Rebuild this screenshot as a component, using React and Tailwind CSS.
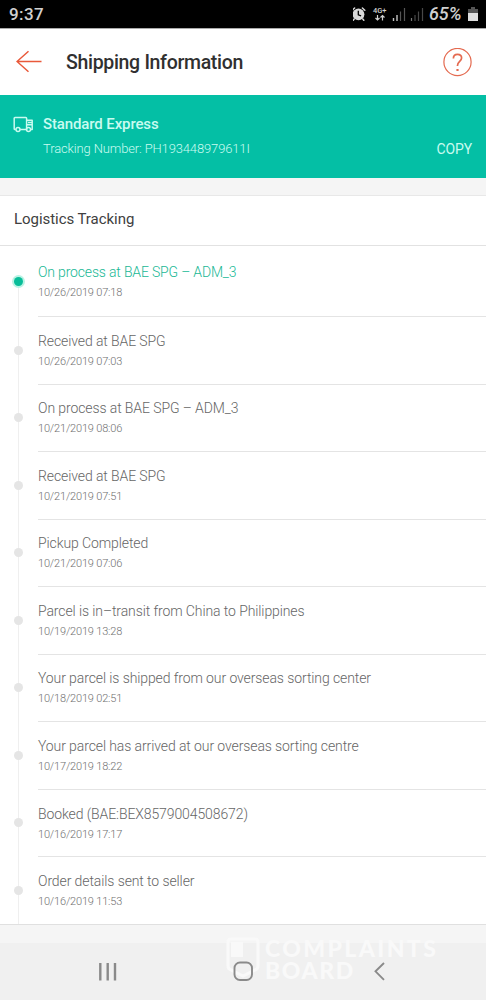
import React from 'react';

const events = [
  ['On process at BAE SPG – ADM_3', '10/26/2019 07:18'],
  ['Received at BAE SPG', '10/26/2019 07:03'],
  ['On process at BAE SPG – ADM_3', '10/21/2019 08:06'],
  ['Received at BAE SPG', '10/21/2019 07:51'],
  ['Pickup Completed', '10/21/2019 07:06'],
  ['Parcel is in–transit from China to Philippines', '10/19/2019 13:28'],
  ['Your parcel is shipped from our overseas sorting center', '10/18/2019 02:51'],
  ['Your parcel has arrived at our overseas sorting centre', '10/17/2019 18:22'],
  ['Booked (BAE:BEX8579004508672)', '10/16/2019 17:17'],
  ['Order details sent to seller', '10/16/2019 11:53'],
];

function StatusIcons() {
  return (
    <svg className="h-7 w-[76px] shrink-0" viewBox="0 0 76 28" fill="none">
      <g transform="translate(-3 0)">
        <g stroke="#d8d8d8" strokeWidth="1.5" strokeLinecap="round">
          <path d="M2.2 10.2 4.6 8M14.8 10.2 12.4 8M4.2 19l-1 1.3M12.8 19l1 1.3" />
        </g>
        <circle cx="8.500" cy="14.300" r="5.900" fill="#d8d8d8" />
        <path d="M8.300 10.800v4l2.800 1" stroke="#000" strokeWidth="1.300" />
      </g>
      <g transform="translate(-2 0)">
        <text x="22" y="13" fill="#d0d0d0" fontSize="7" fontWeight="500" fontFamily="Roboto, sans-serif" textLength="13.500" lengthAdjust="spacingAndGlyphs">4G+</text>
        <path d="M26.500 15v5m-2-2 2 2 2-2M31.500 20.500v-5m-2 2 2-2 2 2" stroke="#d0d0d0" strokeWidth="1.200" />
        <path d="M42.500 21v-3M46 21v-6" stroke="#c4c4c4" strokeWidth="1.400" />
        <path d="M49.500 21v-9.500M53.500 21V8" stroke="#555" strokeWidth="1.200" />
        <path d="M60.500 21v-3" stroke="#777" strokeWidth="1.200" />
        <path d="M64 21v-6M67.500 21v-9.500M71.500 21V8" stroke="#484848" strokeWidth="1.200" />
      </g>
    </svg>
  );
}

function StatusBar() {
  return (
    <div className="flex h-[28px] items-center bg-black pr-2 pl-[9px] text-[#d0d0d0]">
      <span className="w-[35px] text-[17px] leading-none font-medium tracking-[0.4px]">9:37</span>
      <div className="ml-auto flex items-center">
        <StatusIcons />
        <span className="mr-[2px] w-[37px] text-[18px] leading-none font-medium tracking-[-0.1px] italic">65%</span>
        <svg className="h-7 w-[10px]" viewBox="0 0 10 28">
          <path d="M3 7h4v2h3v4H0V9h3z" fill="#555" />
          <path d="M0 13h10v8H0z" fill="#dedede" />
        </svg>
      </div>
    </div>
  );
}

function Header() {
  return (
    <header className="flex h-[67px] items-center border-t border-[#aaa] bg-white pr-[14px] pl-4">
      <svg className="h-[24px] w-[26px]" viewBox="0 0 26 24" fill="none" stroke="#e9593a" strokeWidth="1.500">
        <path d="M25.500 11.500H1M12.500 1.200 1 11.500l11.500 10.300" />
      </svg>
      <h1 className="ml-[24px] pt-[2px] text-[19.500px] leading-6 font-medium tracking-[-0.32px] whitespace-nowrap text-[#303030]">Shipping Information</h1>
      <svg className="ml-auto h-[29px] w-[29px]" viewBox="0 0 29 29" fill="none" stroke="#e46a50">
        <circle cx="14.500" cy="14" r="13.600" strokeWidth="1.200" />
        <path d="M10.400 10.500c0-2.500 1.700-4.100 4.100-4.100 2.500 0 4.100 1.500 4.100 3.700 0 3.200-4.100 3.500-4.100 7.300v.5" strokeWidth="1.700" />
        <path d="M14.500 21v2" strokeWidth="2.200" />
      </svg>
    </header>
  );
}

function Carrier() {
  return (
    <section className="flex h-[83px] items-start bg-[#04bfa5] pr-[14px] pl-[13px] text-[#c9fbf0]">
      <svg className="mt-[21px] h-[17px] w-[21px]" viewBox="0 0 21 17" fill="none" stroke="currentColor" strokeWidth="1.500" strokeLinejoin="round">
        <path d="M2.800 13.500H2a.8.800 0 0 1-.8-.8V2.300a.8.800 0 0 1 .8-.8h10.800a.8.800 0 0 1 .8.800v11.200H7.200M13.600 4.200h5.600v9.300H18M13.600 8.800h5.600M15 6.500h4" />
        <circle cx="5" cy="13.500" r="2" />
        <circle cx="15.500" cy="13.500" r="2" />
      </svg>
      <div className="mt-[18px] ml-[9px] whitespace-nowrap">
        <p className="text-[15px] leading-[22px] font-medium tracking-[-0.12px]">Standard Express</p>
        <p className="mt-[4px] text-[13px] leading-5 font-light tracking-[-0.14px]">Tracking Number: PH193448979611I</p>
      </div>
      <button className="mt-[44px] ml-auto text-[14px] leading-5 tracking-[-0.15px]">COPY</button>
    </section>
  );
}

function TrackingEvent({ title, time, active }) {
  return (
    <li className={active ? 'flex h-[71px]' : 'flex h-[67.550px]'}>
      <div className="flex w-[37px] shrink-0 flex-col items-center">
        <span className={active ? 'h-[29px] shrink-0' : 'h-[28.500px] w-px shrink-0 bg-[#efefef]'} />
        {active ? (
          <span className="flex size-[13px] shrink-0 items-center justify-center rounded-full bg-[#b9f3e4]">
            <span className="size-[9px] rounded-full bg-[#08bd99]" />
          </span>
        ) : (
          <span className="size-[9px] shrink-0 rounded-full bg-[#e5e5e5]" />
        )}
        <span className="w-px flex-1 bg-[#efefef]" />
      </div>
      <div className={active ? 'ml-px min-w-0 flex-1 border-b border-[#e4e4e4] pt-[16px]' : 'ml-px min-w-0 flex-1 border-b border-[#e4e4e4] pt-[13.700px]'}>
        <p className={active ? 'text-[14px] leading-5 font-light tracking-[-0.17px] whitespace-nowrap text-[#20b895]' : 'text-[14px] leading-5 font-light tracking-[-0.1px] whitespace-nowrap text-[#666]'}>{title}</p>
        <p className="mt-[2px] text-[11px] leading-[18px] font-light tracking-[-0.18px] text-[#707070]">{time}</p>
      </div>
    </li>
  );
}

function Watermark() {
  return (
    <div className="pointer-events-none absolute top-[12px] left-[226px] flex gap-[5px] text-[#f9f9f9]">
      <svg className="h-[42px] w-[34px]" viewBox="0 0 34 42" fill="none">
        <path d="M5 2h24q3 0 3 3v24q0 3-3 4L17 39 5 33q-3-1-3-4V5q0-3 3-3z" stroke="currentColor" strokeWidth="3" />
        <path d="M5 5h12v15H5z" fill="currentColor" />
      </svg>
      <div className="font-[Lato,sans-serif] text-[23px] font-black">
        <p className="h-[22px] w-[172px] leading-[22px] tracking-[2.4px]">COMPLAINTS</p>
        <p className="h-[22px] leading-[22px] tracking-[1.6px]">BOARD</p>
      </div>
    </div>
  );
}

function NavigationBar() {
  return (
    <nav className="relative flex h-[75px] flex-col bg-[#f0f0f0]">
      <div className="h-[18px] bg-[#f5f5f5]" />
      <Watermark />
      <svg className="relative h-[57px] w-full" viewBox="0 0 486 57" fill="none" stroke="#8a8a8a" strokeWidth="1.900">
        <path d="M100.300 20V37.500M107.700 20V37.500M115 20V37.500" strokeWidth="2.400" />
        <rect x="234.500" y="19.500" width="17.500" height="17.500" rx="5.500" />
        <path d="m384 20-8.500 8.300 8.500 8.500" />
      </svg>
    </nav>
  );
}

export default function App() {
  return (
    <main className="flex h-[1000px] w-[486px] flex-col overflow-hidden bg-white font-[Roboto,sans-serif]">
      <StatusBar />
      <Header />
      <Carrier />
      <div className="h-[18px] border-b border-[#e8e8e8] bg-[#f5f5f5]" />
      <h2 className="h-[50px] border-b border-[#e2e2e2] pl-[14px] text-[15px] leading-[47px] tracking-[-0.05px] text-[#404040]">Logistics Tracking</h2>
      <ol className="h-[679px] shrink-0 overflow-hidden border-b border-[#e0e0e0]">
        {events.map(([title, time], i) => (
          <TrackingEvent key={time} title={title} time={time} active={i === 0} />
        ))}
      </ol>
      <NavigationBar />
    </main>
  );
}
